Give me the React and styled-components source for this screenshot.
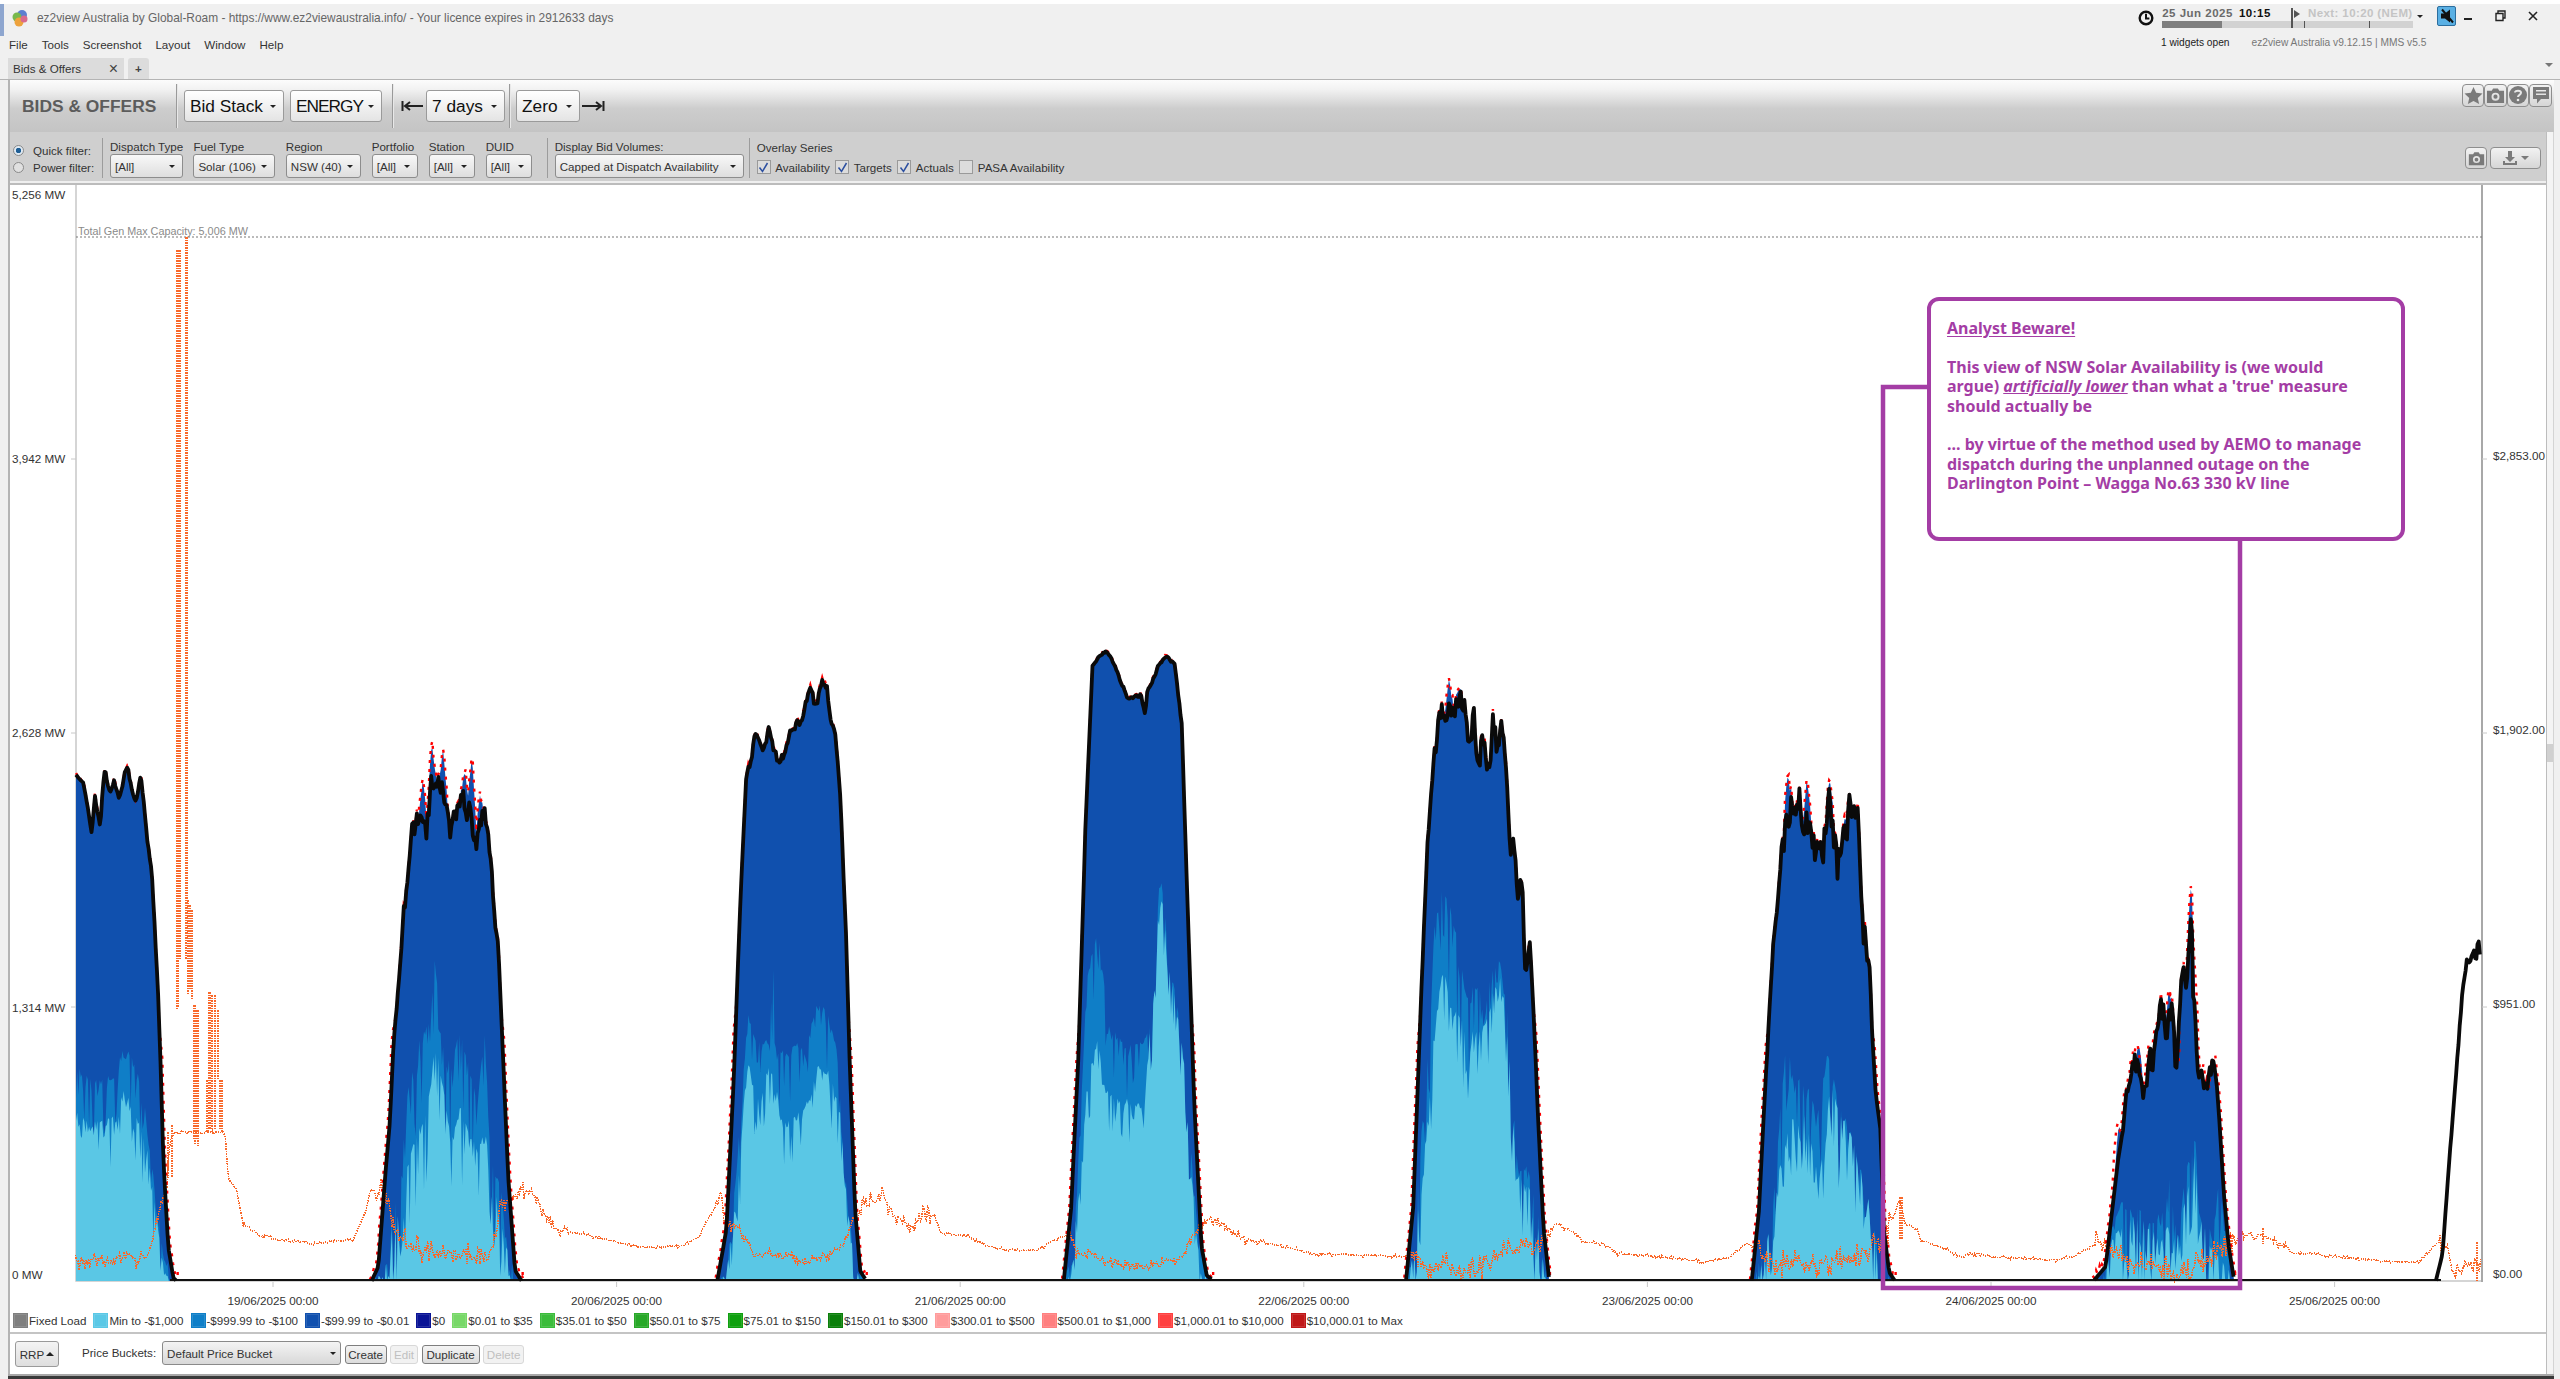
import React, { useMemo } from 'react';
import styled, { createGlobalStyle } from 'styled-components';

const GlobalStyle = createGlobalStyle`
  html, body { margin: 0; padding: 0; background: #f0f0f0; }
  body { width: 2560px; height: 1379px; overflow: hidden; font-family: "Liberation Sans", Arial, sans-serif; color: #222; }
  * { box-sizing: border-box; }
`;

// crop helpers: chart points were read off zoomed crops of the plot
const z7 = ([x, y]) => [60 + x / 3, 700 + y / 2.613];
const z8 = ([x, y]) => [680 + x / 2.8, 640 + y / 2.376];
const z9 = ([x, y]) => [1040 + x / 2.8, 630 + y / 2.34];
const z10 = ([x, y]) => [1400 + x / 2.8, 660 + y / 2.45];
const z11 = ([x, y]) => [1860 + x / 2.24, 860 + y / 3];

const BASE = 1281;

const PEAKS = [
  {
    rough: 6, red: 3,
    top: [[48,195],[70,215],[85,290],[95,350],[105,250],[120,335],[133,178],[150,240],[162,205],[178,265],[200,175],[228,265],[243,190],[262,370],[275,440],[285,600],[295,780],[300,900],[310,1200],[325,1430],[340,1510],[350,1518]].map(z7),
    mid: [[48,965],[100,1000],[135,990],[170,980],[185,910],[210,930],[240,1000],[262,1100],[285,1280],[310,1440],[335,1518]].map(z7),
    low: [[48,1085],[100,1110],[120,1100],[170,1080],[195,1015],[225,1080],[260,1170],[285,1320],[310,1470],[330,1518]].map(z7),
  },
  {
    rough: 26, red: 6,
    top: [[935,1518],[955,1480],[975,1250],[990,1100],[1000,900],[1020,700],[1035,520],[1050,380],[1062,335],[1085,320],[1100,345],[1112,230],[1130,205],[1150,250],[1170,345],[1185,310],[1200,280],[1215,265],[1230,280],[1245,400],[1262,330],[1275,275],[1285,370],[1300,500],[1315,650],[1330,950],[1345,1250],[1365,1490],[1385,1518]].map(z7),
    mid: [[975,1500],[1000,1320],[1020,1280],[1045,1000],[1065,920],[1085,880],[1110,850],[1125,660],[1140,870],[1155,940],[1175,940],[1200,855],[1225,950],[1250,1040],[1275,880],[1290,1180],[1320,1260],[1345,1450],[1370,1518]].map(z7),
    low: [[945,1518],[985,1400],[1010,1350],[1030,1300],[1050,1180],[1075,1130],[1090,1100],[1110,1020],[1125,885],[1140,960],[1155,1050],[1175,1160],[1200,1060],[1225,1130],[1250,1170],[1280,1130],[1300,1250],[1320,1330],[1350,1480],[1365,1518]].map(z7),
    spikes: [[432,745],[443,750],[423,780],[472,755],[465,770],[480,795]],
  },
  {
    rough: 8, red: 4,
    top: [[105,1520],[130,1400],[150,1050],[170,600],[185,330],[200,280],[212,215],[232,260],[248,215],[272,285],[295,270],[308,210],[340,190],[365,115],[380,165],[398,90],[412,110],[420,180],[435,220],[450,400],[465,700],[475,1000],[490,1350],[505,1500],[520,1520]].map(z8),
    mid: [[130,1510],[160,1250],[180,1000],[190,890],[215,950],[245,960],[262,780],[265,960],[300,990],[320,965],[355,965],[380,870],[410,880],[440,970],[460,1250],[490,1500]].map(z8),
    low: [[115,1520],[160,1320],[178,1110],[190,1005],[225,1110],[250,1000],[290,1150],[350,1105],[385,1015],[415,1030],[445,1100],[470,1340],[500,1520]].map(z8),
  },
  {
    rough: 3, red: 2,
    top: [[1075,1520],[1095,1350],[1115,1000],[1135,450],[1155,60],[1185,30],[1200,30],[1220,70],[1255,140],[1290,130],[1303,180],[1308,125],[1340,60],[1365,40],[1385,60],[1405,200],[1420,600],[1440,1100],[1460,1440],[1475,1510],[1490,1520]].map(z8),
    mid: [[1100,1490],[1120,1150],[1140,800],[1160,715],[1180,720],[1195,920],[1260,970],[1310,940],[1330,830],[1340,590],[1350,570],[1370,770],[1400,900],[1430,1200],[1450,1400],[1475,1520]].map(z8),
    low: [[1085,1520],[1120,1300],[1140,1050],[1170,950],[1190,1070],[1270,1105],[1300,1100],[1335,690],[1350,610],[1365,680],[1385,850],[1420,1000],[1440,1350],[1460,1510]].map(z8),
  },
  {
    rough: 26, red: 5,
    top: [[1025,1520],[1045,1350],[1065,900],[1085,500],[1105,270],[1120,190],[1150,180],[1190,190],[1205,280],[1215,200],[1225,280],[1245,260],[1260,340],[1268,220],[1280,280],[1295,230],[1305,350],[1318,500],[1328,520],[1338,640],[1350,605],[1360,800],[1372,720],[1385,950],[1395,1150],[1410,1400],[1425,1515]].map(z9),
    mid: [[1040,1500],[1065,1200],[1085,1000],[1105,680],[1130,600],[1160,690],[1195,860],[1220,830],[1240,860],[1285,770],[1310,900],[1325,1120],[1340,1270],[1370,1260],[1400,1400],[1420,1520]].map(z9),
    low: [[1030,1520],[1060,1350],[1085,1150],[1105,910],[1130,780],[1150,880],[1200,935],[1240,930],[1285,800],[1310,920],[1320,1100],[1340,1280],[1370,1300],[1395,1400],[1420,1520]].map(z9),
    spikes: [[1449,679],[1459,688]],
  },
  {
    rough: 36, red: 6,
    top: [[985,1520],[1005,1350],[1025,1000],[1045,700],[1065,520],[1085,380],[1105,340],[1120,340],[1140,400],[1160,450],[1180,500],[1200,340],[1225,510],[1240,430],[1275,340],[1285,430],[1295,660],[1305,680],[1315,800],[1330,1040],[1345,1150],[1355,1400],[1370,1500],[1385,1520]].map(z10),
    mid: [[1000,1500],[1040,1380],[1065,1100],[1085,900],[1095,1020],[1130,1030],[1170,1100],[1200,950],[1230,1100],[1260,1150],[1300,1270],[1340,1450],[1370,1520]].map(z10),
    low: [[995,1520],[1030,1420],[1060,1260],[1090,1130],[1130,1100],[1175,1270],[1200,1035],[1240,1100],[1280,1200],[1320,1350],[1350,1500]].map(z10),
    spikes: [[1788,772],[1807,778],[1830,782],[1848,805]],
  },
  {
    rough: 36, red: 6,
    top: [[525,1260],[550,1220],[565,1050],[578,900],[590,800],[600,680],[615,620],[625,590],[635,710],[650,620],[660,600],[675,440],[690,510],[700,420],[708,620],[720,400],[735,300],[742,170],[745,350],[755,600],[770,680],[780,680],[790,580],[800,680],[806,800],[815,1000],[825,1150],[838,1260]].map(z11),
    mid: [[545,1250],[565,1100],[580,1030],[620,1050],[650,1090],[680,1060],[690,940],[710,1120],[740,860],[755,850],[770,1080],[790,1130],[805,960],[825,1180],[838,1260]].map(z11),
    low: [[540,1260],[565,1130],[600,1070],[640,1090],[675,1140],[690,1100],[710,1140],[740,960],[750,870],[770,1100],[790,1170],[810,1200],[838,1260]].map(z11),
    spikes: [[2191,888],[2169,990],[2139,1045],[2119,1125]],
  },
];

const RAMP = [[1290,1262],[1305,1180],[1320,900],[1335,650],[1350,380],[1360,300],[1368,305],[1375,270],[1380,300],[1385,230],[1390,310]].map(z11);

const ORANGE = [
  ...[[48,1470],[100,1465],[190,1465],[205,1440],[230,1470],[270,1440],[290,1360],[320,1280],[330,1150],[345,1130],[400,1130],[495,1130],[505,1250],[530,1280],[550,1370],[600,1400],[650,1410],[760,1420],[880,1410],[920,1330],[930,1280],[970,1285],[985,1290],[1000,1380],[1050,1430],[1150,1450],[1230,1450],[1300,1440],[1320,1320],[1395,1280],[1430,1310],[1480,1380]].map(z7),
  [600, 1238], [640, 1247],
  ...[[0,1440],[50,1420],[90,1360],[115,1310],[125,1400],[150,1390],[180,1420],[210,1460],[300,1460],[350,1480],[420,1460],[460,1430],[485,1380],[515,1340],[565,1320],[600,1370],[645,1400],[680,1360],[715,1370],[730,1410],[800,1415],[860,1440],[920,1450],[1000,1450],[1060,1420],[1095,1410],[1110,1460],[1150,1460],[1200,1480],[1300,1490],[1400,1470],[1440,1410],[1480,1380],[1520,1390]].map(z8),
  ...[[570,1425],[700,1445],[760,1460],[1000,1465],[1060,1465],[1090,1500],[1140,1480],[1180,1510],[1240,1490],[1300,1450],[1400,1440],[1440,1390],[1500,1410],[1520,1430]].map(z9),
  ...[[570,1430],[610,1455],[700,1460],[850,1475],[920,1465],[970,1430],[1010,1440],[1030,1480],[1150,1480],[1250,1470],[1320,1440],[1360,1410],[1400,1320]].map(z10),
  ...[[100,1090],[130,1110],[135,1140],[180,1160],[230,1195],[240,1180],[300,1190],[440,1200],[480,1190],[530,1150],[555,1150],[580,1190],[640,1210],[720,1250],[760,1210],[810,1170],[830,1150],[860,1120],[900,1130],[940,1150],[970,1180],[1010,1180],[1100,1195],[1250,1210],[1295,1145],[1315,1160],[1330,1240],[1350,1220],[1382,1215],[1392,1215]].map(z11),
].sort((a, b) => a[0] - b[0]);

const ORANGE_SPIKES = [
  [177,250,1010],[178,250,1008],[180,250,960],[186,237,960],[187,237,940],[188,900,995],[190,905,990],[192,910,1000],
  [194,1005,1140],[195,1005,1145],[196,1010,1140],[197,1010,1140],[198,1010,1146],[207,1080,1133],[209,992,1130],[210,992,1130],
  [212,995,1130],[215,995,1130],[218,1010,1080],[220,1080,1130],[222,1080,1132],[168,1132,1178],[172,1125,1178],[2477,1242,1281],
  [1900,1197,1240],[1902,1197,1240],[2263,1228,1244],
];

const NOISY = [[75,170,8],[375,517,13],[517,570,9],[717,866,7],[866,930,10],[1064,1212,6],[1212,1265,6],[1406,1550,13],[1550,1585,3],[1752,1891,15],[2094,2235,14],[2235,2290,7],[2440,2482,8]];

const makeRand = seed => () => {
  seed = (seed + 0x6d2b79f5) | 0;
  let t = Math.imul(seed ^ (seed >>> 15), 1 | seed);
  t = (t + Math.imul(t ^ (t >>> 7), 61 | t)) ^ t;
  return ((t ^ (t >>> 14)) >>> 0) / 4294967296;
};

const interp = (pts, x) => {
  if (x <= pts[0][0]) return pts[0][1];
  for (let i = 1; i < pts.length; i++) {
    if (x <= pts[i][0]) {
      const [x0, y0] = pts[i - 1];
      const [x1, y1] = pts[i];
      return y0 + ((y1 - y0) * (x - x0)) / (x1 - x0 || 1);
    }
  }
  return pts[pts.length - 1][1];
};

const STEP = 1.19;

const buildChart = () => {
  const rand = makeRand(4217);
  const fills = { top: '', mid: '', low: '' };
  let red = '';
  let black = '';
  PEAKS.forEach(p => {
    const x0 = p.top[0][0];
    const x1 = p.top[p.top.length - 1][0];
    const streak = p.rough > 10 ? 1.5 : 1;
    let top = `M${x0} ${BASE}`;
    let mid = top;
    let low = top;
    let line = '';
    let redLine = '';
    let walk = 0;
    for (let x = x0; x <= x1; x += STEP) {
      const base = interp(p.top, x);
      const edge = Math.min(1, Math.max(0, (BASE - base - 130) / 120));
      const inner = x > x0 + (x1 - x0) * 0.2 && x < x0 + (x1 - x0) * 0.84 ? 1 : 0.2;
      walk = walk * 0.4 + (rand() - 0.5) * p.rough;
      const yT = base + walk * edge * inner;
      const bump = (p.spikes || []).reduce((m, [sx, sy]) => {
        const d = Math.abs(x - sx);
        return d < 5 && yT > sy ? Math.max(m, (yT - sy) * (1 - d / 5)) : m;
      }, 0);
      const yA = yT - bump;
      const yM = Math.max(yT, Math.min(BASE, interp(p.mid, x) + (rand() - 0.5) * 8 + Math.pow(rand(), 4) * 60 * streak));
      const yL = Math.max(yM, Math.min(BASE, interp(p.low, x) + (rand() - 0.5) * 7 + Math.pow(rand(), 4) * 50 * streak));
      const xs = x.toFixed(1);
      top += `L${xs} ${yA.toFixed(1)}`;
      mid += `L${xs} ${yM.toFixed(1)}`;
      low += `L${xs} ${yL.toFixed(1)}`;
      line += `${line ? 'L' : 'M'}${xs} ${yT.toFixed(1)}`;
      const side = x < x0 + (x1 - x0) * 0.5 ? -1.8 : 1.8;
      redLine += `${redLine ? 'L' : 'M'}${(x + (edge < 1 ? side : 0)).toFixed(1)} ${(yA - 1 - Math.pow(rand(), 2) * p.red).toFixed(1)}`;
    }
    const close = `L${x1} ${BASE}Z`;
    fills.top += top + close;
    fills.mid += mid + close;
    fills.low += low + close;
    red += redLine;
    black += line;
    // the small red tick at the end of each day on the baseline
    red += `M${x1 + 1} ${BASE - 9}V${BASE - 1}`;
  });
  let ramp = '';
  for (let x = RAMP[0][0]; x <= RAMP[RAMP.length - 1][0]; x += STEP) {
    const y = interp(RAMP, x) + (rand() - 0.5) * 6 * ((BASE - interp(RAMP, x)) / 400);
    ramp += `${ramp ? 'L' : 'M'}${x.toFixed(1)} ${y.toFixed(1)}`;
  }
  let orange = '';
  for (let x = 75.5; x < 2481; x += STEP) {
    const band = NOISY.find(([a, b]) => x >= a && x < b);
    const amp = band ? band[2] : 2;
    const k = rand() < 0.45 ? 1 : 0.35;
    const y = Math.min(BASE, interp(ORANGE, x) + (rand() - 0.5) * 2 * amp * k);
    orange += `${orange ? 'L' : 'M'}${x.toFixed(1)} ${y.toFixed(1)}`;
  }
  ORANGE_SPIKES.forEach(([x, a, b]) => {
    orange += `M${x} ${a}V${b}`;
  });
  return { fills, red, black, ramp, orange };
};

const Page = styled.div`
  width: 2560px;
  height: 1379px;
  display: flex;
  flex-direction: column;
  overflow: hidden;
  background: #f0f0f0;
  border-top: 4px solid #fff;
  position: relative;
`;

const TopBar = styled.div`
  height: 76px;
  flex: none;
  display: flex;
  justify-content: space-between;
  font-size: 11.6px;
  border-bottom: 1px solid #b4b4b4;
`;

const TopLeft = styled.div`
  display: flex;
  flex-direction: column;
`;

const TitleRow = styled.div`
  height: 27px;
  display: flex;
  align-items: center;
  padding-left: 11px;
  gap: 8px;
  color: #666;
  font-size: 11.9px;
  &::before {
    content: "";
    position: absolute;
    left: 0;
    top: -4px;
    width: 4px;
    height: 36px;
    background: #8ea6cf;
  }
`;

const MenuRow = styled.div`
  height: 26px;
  display: flex;
  align-items: center;
  padding-left: 9px;
  gap: 14px;
  color: #333;
`;

const TabRow = styled.div`
  height: 22px;
  display: flex;
  align-items: flex-end;
  padding-left: 8px;
  gap: 4px;
`;

const Tab = styled.div`
  width: 116px;
  height: 21px;
  padding: 0 6px 0 5px;
  display: flex;
  align-items: center;
  justify-content: space-between;
  background: #dcdcdc;
  color: #333;
  span:last-child { font-size: 16px; color: #444; }
`;

const AddTab = styled.div`
  width: 21px;
  height: 21px;
  background: #dcdcdc;
  border-radius: 3px 3px 0 0;
  text-align: center;
  line-height: 21px;
  font-weight: bold;
  color: #444;
`;

const TopRight = styled.div`
  width: 422px;
  display: flex;
  flex-direction: column;
`;

const StatusRow = styled.div`
  height: 26px;
  display: flex;
  align-items: flex-start;
  padding-top: 2px;
`;

const ClockBox = styled.div`
  width: 25px;
  height: 24px;
  display: flex;
  align-items: center;
  svg { display: block; }
`;

const Timeline = styled.div`
  width: 259px;
  display: flex;
  flex-direction: column;
`;

const TimeText = styled.div`
  height: 14px;
  display: flex;
  align-items: center;
  font-weight: bold;
  font-size: 11.5px;
  color: #6a6a6a;
  letter-spacing: .5px;
  b { color: #111; margin-left: 6px; }
  em { font-style: normal; color: #c4c4c4; margin-left: auto; letter-spacing: .4px; }
`;

const Track = styled.div`
  height: 7px;
  margin-top: 1px;
  background: #d2d2d2;
  position: relative;
`;

const TrackFill = styled.div`
  width: 60px;
  height: 100%;
  background: #7f7f7f;
`;

const TrackMark = styled.div`
  position: absolute;
  left: ${p => p.$x}px;
  bottom: 0;
  width: ${p => p.$w || 1}px;
  height: ${p => p.$h}px;
  background: #555;
`;

const NowFlag = styled.div`
  position: absolute;
  left: 132px;
  bottom: 10px;
  width: 0;
  height: 0;
  border-left: 6px solid #555;
  border-top: 4px solid transparent;
  border-bottom: 4px solid transparent;
`;

const Caret = styled.span`
  width: 0;
  height: 0;
  flex: none;
  display: inline-block;
  border-left: ${p => p.$s || 3}px solid transparent;
  border-right: ${p => p.$s || 3}px solid transparent;
  border-${p => (p.$up ? 'bottom' : 'top')}: ${p => p.$s || 3}px solid ${p => p.$c || '#222'};
`;

const CaretBox = styled.div`
  width: 25px;
  height: 20px;
  display: flex;
  align-items: center;
  padding-left: 4px;
`;

const MuteButton = styled.div`
  width: 20px;
  height: 20px;
  background: #5ab0e4;
  border: 1px solid #2c6e9e;
  border-radius: 2px;
  display: flex;
  align-items: center;
  justify-content: center;
`;

const WinButtons = styled.div`
  display: flex;
  margin-left: 7px;
  width: 100px;
  height: 20px;
  align-items: center;
  svg { display: block; flex: none; margin-left: 22px; }
  svg:first-child { margin-left: 0; }
`;

const InfoRow = styled.div`
  height: 25px;
  display: flex;
  align-items: center;
  padding-left: 23px;
  color: #222;
  font-size: 10.2px;
  span { color: #777; margin-left: 22px; }
`;

const OverflowRow = styled.div`
  height: 20px;
  display: flex;
  justify-content: flex-end;
  align-items: center;
  padding-right: 7px;
`;

const Main = styled.div`
  margin: 0 6px 0 8px;
  flex: 1;
  min-height: 0;
  display: flex;
  flex-direction: column;
  border-left: 2px solid #b4b4b4;
  background: #fff;
`;

const Toolbar = styled.div`
  height: 52px;
  flex: none;
  display: flex;
  align-items: center;
  background: linear-gradient(#fcfcfc 0%, #f2f2f2 18%, #cdcdcd 55%, #c4c4c4 100%);
`;

const ToolTitle = styled.div`
  width: 166px;
  padding-left: 12px;
  font-size: 17.4px;
  font-weight: bold;
  color: #5c5c5c;
  white-space: nowrap;
`;

const ToolDivider = styled.div`
  width: 2px;
  height: 44px;
  margin: 0 ${p => p.$r || 6}px 0 ${p => p.$l || 0}px;
  background: #9a9a9a;
  border-right: 1px solid #e8e8e8;
`;

const ToolSelect = styled.div`
  width: ${p => p.$w}px;
  height: 32px;
  margin-left: ${p => p.$ml || 0}px;
  padding: 1px 7px 0 5px;
  display: flex;
  flex: none;
  align-items: center;
  justify-content: space-between;
  font-size: 17.3px;
  letter-spacing: ${p => p.$ls || 0}px;
  color: #111;
  background: linear-gradient(#fff, #e4e4e4);
  border: 1px solid #9a9a9a;
  border-radius: 3px;
`;

const StepArrow = styled.svg`
  flex: none;
  display: block;
  margin: 0 ${p => p.$mr || 0}px 0 ${p => p.$ml || 0}px;
`;

const ToolIcons = styled.div`
  margin-left: auto;
  margin-bottom: 22px;
  padding-right: 2px;
  display: flex;
`;

const IconButton = styled.div`
  width: ${p => p.$w || 23}px;
  height: ${p => p.$h || 23}px;
  display: flex;
  align-items: center;
  justify-content: center;
  gap: 3px;
  background: linear-gradient(#f2f2f2, #d6d6d6);
  border: 1px solid #8e8e8e;
  border-radius: 4px;
  margin-left: ${p => p.$ml || 0}px;
`;

const Body = styled.div`
  flex: 1;
  min-height: 0;
  display: flex;
`;

const Content = styled.div`
  flex: 1;
  min-width: 0;
  display: flex;
  flex-direction: column;
`;

const ScrollTrack = styled.div`
  width: 8px;
  flex: none;
  background: #f4f4f4;
  border-left: 1px solid #bdbdbd;
  border-right: 1px solid #d4d4d4;
  padding-top: 612px;
`;

const ScrollGrip = styled.div`
  height: 18px;
  background: #d0d0d0;
`;

const FilterBar = styled.div`
  height: 53px;
  flex: none;
  display: flex;
  font-size: 11.6px;
  color: #333;
  background: #cfcfcf;
  border-bottom: 2px solid #bcbcbc;
  box-shadow: inset 0 -2px 0 #efefef;
  padding: 0 5px 4px 0;
`;

const RadioGroup = styled.div`
  width: 90px;
  padding: 11px 0 0 3px;
  display: flex;
  flex-direction: column;
  gap: 2px;
`;

const RadioRow = styled.label`
  display: flex;
  align-items: center;
  height: 15px;
  gap: 9px;
  white-space: nowrap;
`;

const Radio = styled.span`
  width: 11px;
  height: 11px;
  flex: none;
  border-radius: 50%;
  border: 1px solid #8a8a8a;
  background: ${p => (p.$on ? 'radial-gradient(circle, #1f5f96 0 2.5px, #dfe9f2 3px)' : '#e0e0e0')};
`;

const FilterDivider = styled.div`
  width: 1px;
  height: 40px;
  margin: 6px ${p => p.$r || 7}px 0 ${p => p.$l || 2}px;
  background: #9c9c9c;
`;

const FilterFields = styled.div`
  display: flex;
  gap: 10.4px;
`;

const Field = styled.div`
  width: ${p => p.$w}px;
  flex: none;
  display: flex;
  flex-direction: column;
  padding-top: 8px;
`;

const FieldLabel = styled.div`
  height: 14px;
  line-height: 14px;
  white-space: nowrap;
`;

const FieldSelect = styled.div`
  height: 24px;
  padding: 0 7px 0 4px;
  display: flex;
  align-items: center;
  justify-content: space-between;
  white-space: nowrap;
  background: linear-gradient(#f8f8f8, #dedede);
  border: 1px solid #8d8d8d;
  border-radius: 3px;
`;

const Overlay = styled.div`
  display: flex;
  flex-direction: column;
  padding-top: 9px;
`;

const Checks = styled.div`
  display: flex;
  align-items: center;
  height: 24px;
`;

const CheckItem = styled.label`
  display: flex;
  align-items: center;
  gap: 4.5px;
  margin-right: 5.5px;
  white-space: nowrap;
`;

const CheckBox = styled.span`
  width: 14px;
  height: 14px;
  flex: none;
  display: flex;
  align-items: center;
  justify-content: center;
  background: #dcdcdc;
  border: 1px solid #9a9a9a;
`;

const FilterIcons = styled.div`
  margin-left: auto;
  padding-top: 15px;
  display: flex;
`;

const ChartPanel = styled.div`
  position: relative;
  height: 1125px;
  flex: none;
  background: #fff;
`;

const ChartSvg = styled.svg`
  display: block;
  width: 2536px;
  height: 1125px;
  text { font-family: "Liberation Sans", Arial, sans-serif; font-size: 11.7px; fill: #333; }
`;

const Callout = styled.div`
  position: absolute;
  left: 1917px;
  top: 112px;
  width: 478px;
  height: 244px;
  padding: 18px 6px 0 16px;
  background: #fff;
  border: 4.5px solid #a43da5;
  border-radius: 12px;
  color: #a43da5;
  font-family: "Noto Sans", "Liberation Sans", sans-serif;
  font-weight: bold;
  font-size: 16px;
  line-height: 19.4px;
  p { margin: 0 0 19.4px; white-space: nowrap; }
  u { text-underline-offset: 2px; }
  i { font-weight: bold; text-decoration: underline; margin-right: 4px; }
`;

const Legend = styled.div`
  height: 24px;
  flex: none;
  display: flex;
  align-items: center;
  padding: 0 0 2px 3px;
  gap: 7px;
  font-size: 11.6px;
  color: #333;
  background: #fff;
  border-bottom: 2px solid #c4c4c4;
`;

const LegendItem = styled.div`
  display: flex;
  align-items: center;
  white-space: nowrap;
  gap: 1px;
`;

const Swatch = styled.span`
  width: 15px;
  height: 15px;
  flex: none;
  background: ${p => p.$c};
  border: 1px solid ${p => p.$c};
  box-shadow: inset 0 0 0 1px rgba(255, 255, 255, .12);
`;

const BottomBar = styled.div`
  flex: 1;
  min-height: 0;
  display: flex;
  align-items: flex-start;
  padding: 7px 0 0 5px;
  font-size: 11.6px;
  color: #333;
  background: #fff;
`;

const RrpButton = styled.div`
  width: 44px;
  height: 26px;
  display: flex;
  align-items: center;
  justify-content: center;
  gap: 2px;
  background: linear-gradient(#f4f4f4, #dedede);
  border: 1px solid #9a9a9a;
  border-radius: 3px;
`;

const BucketLabel = styled.div`
  height: 24px;
  line-height: 24px;
  margin: 0 6px 0 23px;
`;

const BucketSelect = styled.div`
  width: 179px;
  height: 24px;
  padding: 0 4px;
  display: flex;
  align-items: center;
  justify-content: space-between;
  background: linear-gradient(#f4f4f4, #d8d8d8);
  border: 1px solid #8a8a8a;
  border-radius: 3px;
`;

const BucketButton = styled.div`
  width: ${p => p.$w}px;
  height: 19px;
  margin: 4px 0 0 3.5px;
  display: flex;
  align-items: center;
  justify-content: center;
  color: ${p => (p.$off ? '#c0c0c0' : '#333')};
  background: ${p => (p.$off ? '#f2f2f2' : 'linear-gradient(#f4f4f4, #dcdcdc)')};
  border: 1px solid ${p => (p.$off ? '#d8d8d8' : '#7e7e7e')};
  border-radius: 3px;
`;

const FootStrip = styled.div`
  height: 5px;
  flex: none;
  margin: 0 6px 0 8px;
  border-top: 2px solid #a8a8a8;
  background: #3a3a3a;
`;

const Logo = () => (
  <svg width="18" height="18" viewBox="0 0 18 18">
    <circle cx="11" cy="6" r="5" fill="#5b7fd0" />
    <circle cx="6" cy="8" r="4.5" fill="#78b84c" />
    <circle cx="8" cy="13" r="4.5" fill="#eda23c" />
    <circle cx="13" cy="10" r="3.5" fill="#d86a8c" />
  </svg>
);

const ClockIcon = () => (
  <svg width="16" height="16" viewBox="0 0 16 16">
    <circle cx="8" cy="8" r="6.3" fill="none" stroke="#111" strokeWidth="2.4" />
    <path d="M8 3.8V8.6H11.4" fill="none" stroke="#111" strokeWidth="2" />
  </svg>
);

const MuteIcon = () => (
  <svg width="16" height="16" viewBox="0 0 16 16">
    <path d="M2 5.5H6L11 1.5V14.5L6 10.5H2Z" fill="#111" />
    <path d="M3 1.5L14 14.5" stroke="#111" strokeWidth="2" />
  </svg>
);

const CameraIcon = ({ size = 19 }) => (
  <svg width={size} height={size} viewBox="0 0 20 20">
    <path fillRule="evenodd" fill="#7a7a7a" d="M1 5H6L7.5 2.5H12.5L14 5H19V18H1ZM10 7A4.2 4.2 0 1 0 10 15.4A4.2 4.2 0 1 0 10 7ZM10 9A2.2 2.2 0 1 1 10 13.4A2.2 2.2 0 1 1 10 9Z" />
  </svg>
);

const StarIcon = () => (
  <svg width="19" height="19" viewBox="0 0 20 20">
    <path fill="#7a7a7a" d="M10 1L12.8 7.2L19.5 8L14.5 12.5L15.9 19L10 15.7L4.1 19L5.5 12.5L.5 8L7.2 7.2Z" />
  </svg>
);

const HelpIcon = () => (
  <svg width="20" height="20" viewBox="0 0 20 20">
    <circle cx="10" cy="10" r="9" fill="#7a7a7a" />
    <path d="M7 7.5C7 5.2 13 5 13 7.8C13 10 10 9.8 10 12" fill="none" stroke="#e8e8e8" strokeWidth="2" />
    <circle cx="10" cy="15" r="1.3" fill="#e8e8e8" />
  </svg>
);

const CommentIcon = () => (
  <svg width="20" height="20" viewBox="0 0 20 20">
    <path fillRule="evenodd" fill="#7a7a7a" d="M2 2H18V14H10L6 18.5V14H2ZM5 5V6.6H15V5ZM5 8.4V10H15V8.4Z" />
  </svg>
);

const DownloadIcon = () => (
  <svg width="16" height="16" viewBox="0 0 16 16">
    <path fill="#7a7a7a" d="M6 1H10V7H13L8 12L3 7H6ZM1 11H3V13H13V11H15V15H1Z" />
  </svg>
);

const TICK = <path d="M1.5 5.5L4.5 9.5L9.5 1" fill="none" stroke="#2c4fa0" strokeWidth="1.5" />;

const FIELDS = [
  ['Dispatch Type', '[All]', 73],
  ['Fuel Type', 'Solar (106)', 82],
  ['Region', 'NSW (40)', 75.5],
  ['Portfolio', '[All]', 46.6],
  ['Station', '[All]', 46.6],
  ['DUID', '[All]', 46],
];

const LEGEND = [
  ['Fixed Load', '#7f7f7f'],
  ['Min to -$1,000', '#5ac8e6'],
  ['-$999.99 to -$100', '#0f7fc8'],
  ['-$99.99 to -$0.01', '#1050ae'],
  ['$0', '#0a1496'],
  ['$0.01 to $35', '#78d868'],
  ['$35.01 to $50', '#3cbc3c'],
  ['$50.01 to $75', '#28a828'],
  ['$75.01 to $150', '#0fa00f'],
  ['$150.01 to $300', '#0a7f0a'],
  ['$300.01 to $500', '#ff9c9c'],
  ['$500.01 to $1,000', '#ff8080'],
  ['$1,000.01 to $10,000', '#ff4040'],
  ['$10,000.01 to Max', '#c01818'],
];

const DATES = ['19/06/2025 00:00', '20/06/2025 00:00', '21/06/2025 00:00', '22/06/2025 00:00', '23/06/2025 00:00', '24/06/2025 00:00', '25/06/2025 00:00'];

const Chart = () => {
  const c = useMemo(buildChart, []);
  return (
    <ChartSvg viewBox="10 185 2536 1125">
      <path d="M76 185V1281H2482" fill="none" stroke="#c8c8c8" strokeWidth="1.5" />
      <path d="M2482 185V1282" stroke="#a8a8a8" strokeWidth="2" />
      <path d="M76 237H2482" stroke="#777" strokeWidth="1" strokeDasharray="2 2" />
      <text x="78" y="235" style={{ fill: '#8a8a8a', fontSize: 10.8 }}>Total Gen Max Capacity: 5,006 MW</text>
      {[['5,256 MW', 199], ['3,942 MW', 463], ['2,628 MW', 737], ['1,314 MW', 1012], ['0 MW', 1279]].map(([t, y]) => (
        <text key={t} x="12" y={y}>{t}</text>
      ))}
      {[['$2,853.00', 460], ['$1,902.00', 734], ['$951.00', 1008], ['$0.00', 1278]].map(([t, y]) => (
        <text key={t} x="2493" y={y}>{t}</text>
      ))}
      {[459, 733, 1007].map(y => <path key={y} d={`M71 ${y}H76M2482 ${y}H2487`} stroke="#c8c8c8" />)}
      {DATES.map((d, i) => {
        const x = 273 + i * 343.6;
        return (
          <g key={d}>
            <path d={`M${x} 1282V1287`} stroke="#c8c8c8" />
            <text x={x} y="1305" textAnchor="middle">{d}</text>
          </g>
        );
      })}
      <path d={c.fills.top} fill="#1050ae" />
      <path d={c.fills.mid} fill="#0f7ec7" />
      <path d={c.fills.low} fill="#5ac7e5" />
      <path d={c.orange} fill="none" stroke="#f9682a" strokeWidth="1.5" strokeDasharray="1.5 1" shapeRendering="crispEdges" />
      <path d={c.red} fill="none" stroke="#f00" strokeWidth="2.4" strokeDasharray="3 6" />
      <path d={`M170 ${BASE - 1}H2441`} stroke="#111" strokeWidth="2" />
      <path d={c.black + c.ramp} fill="none" stroke="#0a0a0a" strokeWidth="3.8" strokeLinejoin="round" />
      <path d="M1930 387H1883V1288H2240V540" fill="none" stroke="#a43da5" strokeWidth="4.5" />
    </ChartSvg>
  );
};

export default function App() {
  return (
    <Page>
      <GlobalStyle />
      <TopBar>
        <TopLeft>
          <TitleRow>
            <Logo />
            <span>ez2view Australia by Global-Roam - https://www.ez2viewaustralia.info/ - Your licence expires in 2912633 days</span>
          </TitleRow>
          <MenuRow>
            {['File', 'Tools', 'Screenshot', 'Layout', 'Window', 'Help'].map(m => <span key={m}>{m}</span>)}
          </MenuRow>
          <TabRow>
            <Tab><span>Bids &amp; Offers</span><span>×</span></Tab>
            <AddTab>+</AddTab>
          </TabRow>
        </TopLeft>
        <TopRight>
          <StatusRow>
            <ClockBox><ClockIcon /></ClockBox>
            <Timeline>
              <TimeText>25 Jun 2025 <b>10:15</b><em>Next: 10:20 (NEM)</em></TimeText>
              <Track>
                <TrackFill />
                <TrackMark $x={129} $w={2} $h={20} />
                <TrackMark $x={142} $h={7} />
                <TrackMark $x={207} $h={7} />
                <NowFlag />
              </Track>
            </Timeline>
            <CaretBox><Caret /></CaretBox>
            <MuteButton><MuteIcon /></MuteButton>
            <WinButtons>
              <svg width="10" height="12" viewBox="0 0 10 12"><path d="M1 9H9" stroke="#222" strokeWidth="2" /></svg>
              <svg width="11" height="12" viewBox="0 0 11 12"><path d="M1 3.5H8V10.5H1ZM3 3V1H10V8H8" fill="none" stroke="#222" strokeWidth="1.4" /></svg>
              <svg width="10" height="12" viewBox="0 0 10 12"><path d="M1 2L9 10M9 2L1 10" stroke="#222" strokeWidth="1.6" /></svg>
            </WinButtons>
          </StatusRow>
          <InfoRow>1 widgets open<span>ez2view Australia v9.12.15 | MMS v5.5</span></InfoRow>
          <OverflowRow><Caret $s={4} $c="#777" /></OverflowRow>
        </TopRight>
      </TopBar>
      <Main>
        <Toolbar>
          <ToolTitle>BIDS &amp; OFFERS</ToolTitle>
          <ToolDivider />
          <ToolSelect $w={100}>Bid Stack<Caret /></ToolSelect>
          <ToolSelect $w={92} $ml={6} $ls={-1}>ENERGY<Caret /></ToolSelect>
          <ToolDivider $l={10} $r={7} />
          <StepArrow width="22" height="16" viewBox="0 0 22 16" $mr={3}>
            <path d="M1.5 3V13M22 8H5M9 4L4 8L9 12" fill="none" stroke="#222" strokeWidth="2" />
          </StepArrow>
          <ToolSelect $w={79}>7 days<Caret /></ToolSelect>
          <ToolDivider $l={4} $r={5} />
          <ToolSelect $w={64}>Zero<Caret /></ToolSelect>
          <StepArrow width="23" height="16" viewBox="0 0 23 16" $ml={2}>
            <path d="M21.5 3V13M0 8H18M14 4L19 8L14 12" fill="none" stroke="#222" strokeWidth="2" />
          </StepArrow>
          <ToolIcons>
            <IconButton $w={22}><StarIcon /></IconButton>
            <IconButton $w={23}><CameraIcon /></IconButton>
            <IconButton $w={22}><HelpIcon /></IconButton>
            <IconButton $w={23}><CommentIcon /></IconButton>
          </ToolIcons>
        </Toolbar>
        <Body>
          <Content>
            <FilterBar>
              <RadioGroup>
                <RadioRow><Radio $on />Quick filter:</RadioRow>
                <RadioRow><Radio />Power filter:</RadioRow>
              </RadioGroup>
              <FilterDivider />
              <FilterFields>
                {FIELDS.map(([label, value, w]) => (
                  <Field key={label} $w={w}>
                    <FieldLabel>{label}</FieldLabel>
                    <FieldSelect>{value}<Caret /></FieldSelect>
                  </Field>
                ))}
              </FilterFields>
              <FilterDivider $l={15} $r={7} />
              <Field $w={189}>
                <FieldLabel>Display Bid Volumes:</FieldLabel>
                <FieldSelect>Capped at Dispatch Availability<Caret /></FieldSelect>
              </Field>
              <FilterDivider $l={5} $r={7} />
              <Overlay>
                <FieldLabel>Overlay Series</FieldLabel>
                <Checks>
                  {['Availability', 'Targets', 'Actuals'].map(t => (
                    <CheckItem key={t}>
                      <CheckBox><svg width="11" height="11" viewBox="0 0 11 11">{TICK}</svg></CheckBox>
                      {t}
                    </CheckItem>
                  ))}
                  <CheckItem><CheckBox />PASA Availability</CheckItem>
                </Checks>
              </Overlay>
              <FilterIcons>
                <IconButton $w={22} $h={22}><CameraIcon size={17} /></IconButton>
                <IconButton $w={51} $h={22} $ml={3}><DownloadIcon /><Caret $s={4} $c="#7a7a7a" /></IconButton>
              </FilterIcons>
            </FilterBar>
            <ChartPanel>
              <Chart />
              <Callout>
                <p><u>Analyst Beware!</u></p>
                <p>This view of NSW Solar Availability is (we would<br />argue) <i>artificially lower</i>than what a 'true' measure<br />should actually be</p>
                <p>... by virtue of the method used by AEMO to manage<br />dispatch during the unplanned outage on the<br />Darlington Point – Wagga No.63 330 kV line</p>
              </Callout>
            </ChartPanel>
            <Legend>
              {LEGEND.map(([t, c]) => (
                <LegendItem key={t}><Swatch $c={c} />{t}</LegendItem>
              ))}
            </Legend>
            <BottomBar>
              <RrpButton>RRP<Caret $s={4} $up /></RrpButton>
              <BucketLabel>Price Buckets:</BucketLabel>
              <BucketSelect>Default Price Bucket<Caret /></BucketSelect>
              <BucketButton $w={42}>Create</BucketButton>
              <BucketButton $w={28} $off>Edit</BucketButton>
              <BucketButton $w={58}>Duplicate</BucketButton>
              <BucketButton $w={41} $off>Delete</BucketButton>
            </BottomBar>
          </Content>
          <ScrollTrack><ScrollGrip /></ScrollTrack>
        </Body>
      </Main>
      <FootStrip />
    </Page>
  );
}
